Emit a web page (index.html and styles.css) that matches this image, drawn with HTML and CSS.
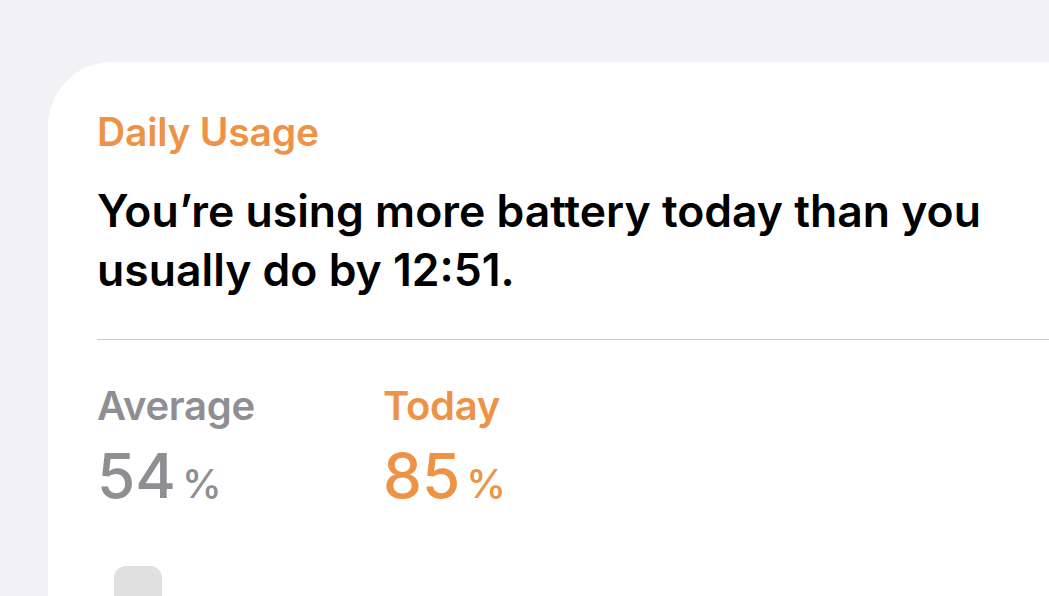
FILE: index.html
```html
<!DOCTYPE html>
<html lang="en">
<head>
    <meta charset="UTF-8">
    <meta name="viewport" content="width=device-width, initial-scale=1.0">
    <title>Battery</title>
    <link rel="stylesheet" href="styles.css">
</head>
<body>
    <div class="card">
        <h2 class="title">Daily Usage</h2>
        <p class="message">You’re using more battery today than you usually do by 12:51.</p>
        <hr class="divider">
        <div class="stats">
            <div class="stat">
                <div class="label">Average</div>
                <div class="value">54<span class="unit">%</span></div>
            </div>
            <div class="stat today">
                <div class="label">Today</div>
                <div class="value">85<span class="unit">%</span></div>
            </div>
        </div>
        <div class="chart">
            <div class="bar"></div>
        </div>
    </div>
</body>
</html>
```

FILE: styles.css
```css
body {
    margin: 0;
    padding: 0;
    background-color: #f1f1f6;
    font-family: Inter, "Noto Sans", sans-serif;
    overflow: hidden;
    height: 596px;
}

.card {
    background-color: #fff;
    margin: 62px 0 0 48px;
    border-top-left-radius: 64px;
    padding: 48px 0 0 49px;
    height: 486px;
}

.title {
    color: #ee9345;
    font-size: 39px;
    font-weight: 600;
    margin: 0;
    line-height: 44px;
    letter-spacing: -0.2px;
}

.message {
    color: #000;
    font-size: 44.5px;
    font-weight: 600;
    line-height: 59px;
    margin: 28px 0 0 0;
    letter-spacing: 0;
}

.divider {
    border: none;
    border-top: 1px solid #c8c8cc;
    margin: 39px 0 0 0;
}

.stats {
    display: flex;
    margin-top: 42px;
}

.stat {
    width: 286px;
    color: #8e8e93;
}

.stat.today {
    color: #ee9345;
}

.label {
    font-size: 40px;
    font-weight: 600;
    line-height: 48px;
    letter-spacing: -0.3px;
}

.value {
    font-size: 62px;
    font-weight: 500;
    line-height: 78px;
    margin-top: 7px;
}

.unit {
    font-size: 40px;
    font-weight: 500;
    margin-left: 6px;
}

.chart {
    padding: 43px 0 0 17px;
}

.bar {
    width: 48px;
    height: 60px;
    background-color: #e0e0e0;
    border-radius: 12px;
}
```
